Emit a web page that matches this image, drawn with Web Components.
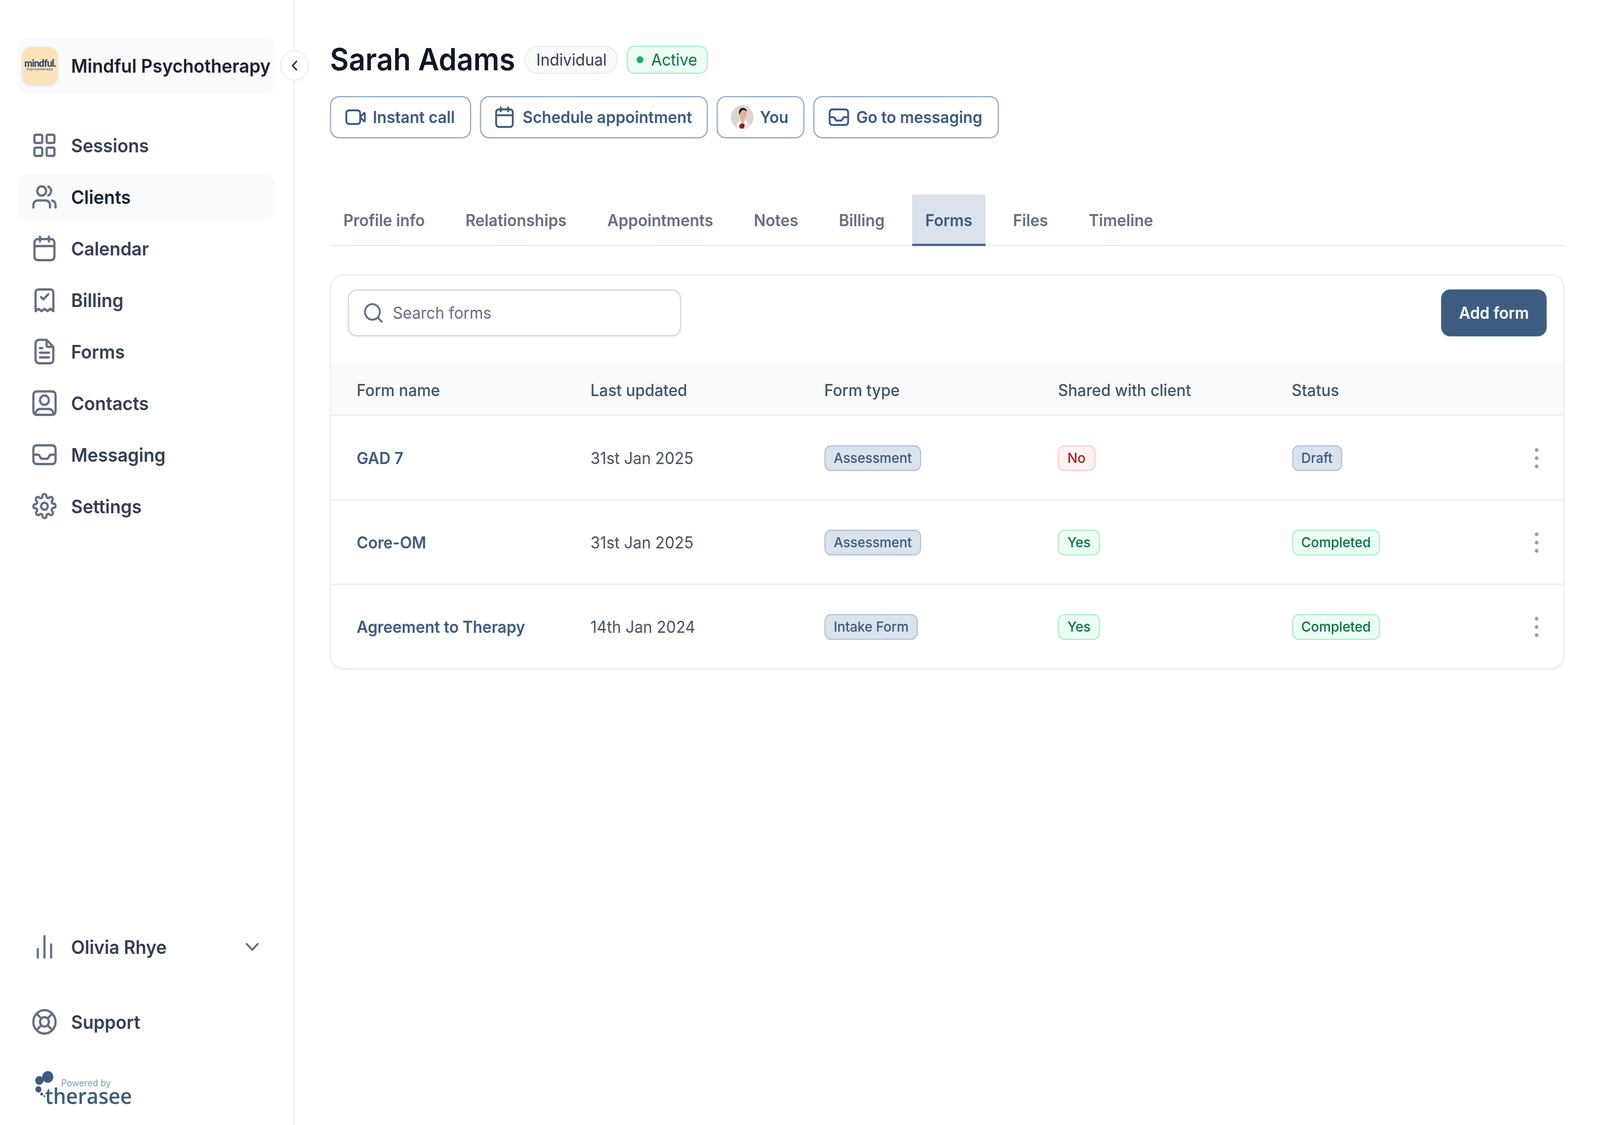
<!DOCTYPE html>
<html lang="en">
<head>
<meta charset="utf-8">
<title>Sarah Adams - Forms</title>
<style>
  html, body { margin: 0; padding: 0; width: 100%; height: 100%; background: #fff; overflow: hidden; }
  body { font-family: Inter, "Liberation Sans", sans-serif; }
</style>
</head>
<body>
<app-shell>
  <side-bar slot="side"></side-bar>
  <client-page slot="main"></client-page>
</app-shell>

<script>
const ICONS = {
  sessions: '<rect x="3" y="3" width="7" height="7" rx="1"/><rect x="14" y="3" width="7" height="7" rx="1"/><rect x="3" y="14" width="7" height="7" rx="1"/><rect x="14" y="14" width="7" height="7" rx="1"/>',
  clients: '<path d="M22 21v-2a4.002 4.002 0 0 0-3-3.874M15.5 3.291a4.001 4.001 0 0 1 0 7.418M17 21c0-1.864 0-2.796-.305-3.53a4 4 0 0 0-2.164-2.165C13.796 15 12.864 15 11 15H8c-1.864 0-2.796 0-3.53.305a4 4 0 0 0-2.165 2.164C2 18.204 2 19.136 2 21M13.5 7a4 4 0 1 1-8 0 4 4 0 0 1 8 0Z"/>',
  calendar: '<path d="M21 10H3m13-8v4M8 2v4m-.2 16h8.4c1.68 0 2.52 0 3.162-.327a3 3 0 0 0 1.311-1.311C21 19.72 21 18.88 21 17.2V8.8c0-1.68 0-2.52-.327-3.162a3 3 0 0 0-1.311-1.311C18.72 4 17.88 4 16.2 4H7.8c-1.68 0-2.52 0-3.162.327a3 3 0 0 0-1.311 1.311C3 6.28 3 7.12 3 8.8v8.4c0 1.68 0 2.52.327 3.162a3 3 0 0 0 1.311 1.311C5.28 22 6.12 22 7.8 22Z"/>',
  billing: '<path d="M9 9.5l2 2 4.5-4.5M20 21.5V7c0-1.4 0-2.1-.27-2.64a2.5 2.5 0 0 0-1.09-1.09C18.1 3 17.4 3 16 3H8c-1.4 0-2.1 0-2.64.27a2.5 2.5 0 0 0-1.09 1.09C4 4.9 4 5.6 4 7v14.5l2.67-2 2.66 2 2.67-2 2.67 2 2.66-2 2.67 2Z"/>',
  forms: '<path d="M14 2.27V6.4c0 .56 0 .84.109 1.054a1 1 0 0 0 .437.437c.214.11.494.11 1.054.11h4.13M16 13H8m8 4H8m2-8H8m6-7H8.8c-1.68 0-2.52 0-3.162.327a3 3 0 0 0-1.311 1.311C4 4.28 4 5.12 4 6.8v10.4c0 1.68 0 2.52.327 3.162a3 3 0 0 0 1.311 1.311C6.28 22 7.12 22 8.8 22h6.4c1.68 0 2.52 0 3.162-.327a3 3 0 0 0 1.311-1.311C20 19.72 20 18.88 20 17.2V8l-6-6Z"/>',
  contacts: '<path d="M4 21.818c.603.182 1.416.182 2.8.182h10.4c1.384 0 2.197 0 2.8-.182M4 21.818a2.3 2.3 0 0 1-.362-.142 3 3 0 0 1-1.311-1.311C2 19.723 2 18.883 2 17.2V6.8c0-1.68 0-2.52.327-3.162a3 3 0 0 1 1.311-1.311C4.28 2 5.12 2 6.8 2h10.4c1.68 0 2.52 0 3.162.327a3 3 0 0 1 1.311 1.311C22 4.28 22 5.12 22 6.8v10.4c0 1.68 0 2.52-.327 3.162a3 3 0 0 1-1.311 1.311 2.3 2.3 0 0 1-.362.145M4 21.818c0-.809.005-1.237.077-1.598a4 4 0 0 1 3.143-3.143C7.606 17 8.07 17 9 17h6c.93 0 1.394 0 1.78.077a4 4 0 0 1 3.143 3.143c.072.36.077.79.077 1.598M16 9.5a4 4 0 1 1-8 0 4 4 0 0 1 8 0Z"/>',
  inbox: '<path d="M2.5 12h3.38c.76 0 1.45.43 1.79 1.1l.66 1.3c.34.68 1.03 1.1 1.79 1.1h3.76c.76 0 1.45-.42 1.79-1.1l.66-1.3c.34-.67 1.03-1.1 1.79-1.1h3.38M2 8.8c0-1.68 0-2.52.327-3.162a3 3 0 0 1 1.311-1.311C4.28 4 5.12 4 6.8 4h10.4c1.68 0 2.52 0 3.162.327a3 3 0 0 1 1.311 1.311C22 6.28 22 7.12 22 8.8v6.4c0 1.68 0 2.52-.327 3.162a3 3 0 0 1-1.311 1.311C19.72 20 18.88 20 17.2 20H6.8c-1.68 0-2.52 0-3.162-.327a3 3 0 0 1-1.311-1.311C2 17.72 2 16.88 2 15.2V8.8Z"/>',
  settings: '<path d="M12 15a3 3 0 1 0 0-6 3 3 0 0 0 0 6Z"/><path d="M18.727 14.727a1.5 1.5 0 0 0 .3 1.655l.055.054a1.818 1.818 0 1 1-2.573 2.573l-.055-.055a1.5 1.5 0 0 0-1.654-.3 1.5 1.5 0 0 0-.91 1.373v.155a1.818 1.818 0 1 1-3.635 0V20.1a1.5 1.5 0 0 0-.982-1.373 1.5 1.5 0 0 0-1.655.3l-.054.055a1.818 1.818 0 1 1-2.573-2.573l.055-.055a1.5 1.5 0 0 0 .3-1.654 1.5 1.5 0 0 0-1.373-.91h-.155a1.818 1.818 0 1 1 0-3.635H3.9a1.5 1.5 0 0 0 1.373-.982 1.5 1.5 0 0 0-.3-1.655l-.055-.054A1.818 1.818 0 1 1 7.491 4.59l.054.055a1.5 1.5 0 0 0 1.655.3h.073a1.5 1.5 0 0 0 .909-1.372v-.155a1.818 1.818 0 0 1 3.636 0V3.5a1.5 1.5 0 0 0 .91 1.373 1.5 1.5 0 0 0 1.654-.3l.054-.055a1.818 1.818 0 1 1 2.573 2.573l-.055.055a1.5 1.5 0 0 0-.3 1.654v.073a1.5 1.5 0 0 0 1.373.909h.155a1.818 1.818 0 0 1 0 3.636H20.1a1.5 1.5 0 0 0-1.373.909Z"/>',
  bars: '<path d="M6 21v-7M12 21V3M18 21V10"/>',
  support: '<path d="M9.13 9.13 4.93 4.93M9.13 14.87l-4.2 4.2M14.87 9.13l4.2-4.2M14.87 14.87l4.2 4.2M22 12c0 5.52-4.48 10-10 10S2 17.52 2 12 6.48 2 12 2s10 4.48 10 10ZM16 12a4 4 0 1 1-8 0 4 4 0 0 1 8 0Z"/>',
  chevronDown: '<path d="m6 9 6 6 6-6"/>',
  chevronLeft: '<path d="m15 18-6-6 6-6"/>',
  video: '<path d="M22 8.93c0-.6 0-.9-.12-1.04a.5.5 0 0 0-.42-.17c-.19.01-.43.2-.9.59L17 12l3.56 3.69c.47.39.71.58.9.59a.5.5 0 0 0 .42-.17c.12-.14.12-.44.12-1.04V8.93Z"/><path d="M2 9.8c0-1.68 0-2.52.33-3.16a3 3 0 0 1 1.31-1.31C4.28 5 5.12 5 6.8 5h5.4c1.68 0 2.52 0 3.16.33a3 3 0 0 1 1.31 1.31C17 7.28 17 8.12 17 9.8v4.4c0 1.68 0 2.52-.33 3.16a3 3 0 0 1-1.31 1.31C14.72 19 13.88 19 12.2 19H6.8c-1.68 0-2.52 0-3.16-.33a3 3 0 0 1-1.31-1.31C2 16.72 2 15.88 2 14.2V9.8Z"/>',
  search: '<path d="m21 21-4.35-4.35M19 11a8 8 0 1 1-16 0 8 8 0 0 1 16 0Z"/>',
  dots: '<circle cx="12" cy="5" r=".8"/><circle cx="12" cy="12" r=".8"/><circle cx="12" cy="19" r=".8"/>'
};

class UiIcon extends HTMLElement {
  connectedCallback() {
    const size = this.getAttribute('size') || 24;
    const width = this.getAttribute('stroke') || 2;
    this.attachShadow({ mode: 'open' });
    this.shadowRoot.innerHTML = `
      <style>
        :host { display: inline-flex; flex: none; width: ${size}px; height: ${size}px; }
        svg { width: 100%; height: 100%; display: block; fill: none; stroke: currentColor;
              stroke-width: ${width}; stroke-linecap: round; stroke-linejoin: round; }
      </style>
      <svg viewBox="0 0 24 24" aria-hidden="true">${ICONS[this.getAttribute('name')] || ''}</svg>`;
  }
}
customElements.define('ui-icon', UiIcon);

let shellTmpl = document.createElement('template');
shellTmpl.innerHTML = `
<style>
  :host { display: grid; grid-template-columns: 265px minmax(0, 1fr); width: 1440px; height: 960px; transform-origin: 0 0;
          font-family: Inter, "Liberation Sans", sans-serif; background: #fff; }
</style>
<slot name="side"></slot>
<slot name="main"></slot>`;
class AppShell extends HTMLElement {
  constructor() {
    super();
    this.attachShadow({ mode: 'open' });
    this.shadowRoot.appendChild(shellTmpl.content.cloneNode(true));
  }
  connectedCallback() {
    // design is 1440x960, fit it to the window that we really got
    this.style.transform = `scale(${window.innerWidth / 1440}, ${window.innerHeight / 960})`;
  }
}
customElements.define('app-shell', AppShell);

let navTmpl = document.createElement('template');
navTmpl.innerHTML = `
<style>
  :host { display: flex; align-items: center; gap: 12px; height: 40px; padding: 0 12px; border-radius: 8px;
          color: #344054; font-size: 16px; font-weight: 600; line-height: 24px; }
  :host([active]) { background: #f9fafb; color: #182230; }
  .icon { color: #667085; display: flex; }
  .label { flex: 1; white-space: nowrap; }
  .after { color: #667085; display: flex; margin-right: -1px; }
</style>
<span class="icon"><slot name="icon"></slot></span>
<span class="label"><slot></slot></span>
<span class="after"><slot name="after"></slot></span>`;
class NavItem extends HTMLElement {
  constructor() {
    super();
    this.attachShadow({ mode: 'open' });
    this.shadowRoot.appendChild(navTmpl.content.cloneNode(true));
  }
  connectedCallback() {
    const name = this.getAttribute('icon');
    if (name && !this.querySelector('[slot=icon]')) {
      const icon = document.createElement('ui-icon');
      icon.setAttribute('name', name);
      icon.setAttribute('slot', 'icon');
      this.appendChild(icon);
    }
  }
}
customElements.define('nav-item', NavItem);

let brandTmpl = document.createElement('template');
brandTmpl.innerHTML = `
<style>
  :host { display: flex; align-items: center; gap: 12px; height: 48px; padding: 0 4px; border-radius: 8px;
          background: #f9fafb; color: #182230; font-size: 16px; font-weight: 600; white-space: nowrap; }
  .logo { width: 32px; height: 32px; border-radius: 8px; background: #fde3b8; flex: none; box-sizing: border-box;
          display: flex; flex-direction: column; align-items: center; justify-content: center;
          box-shadow: 0 1px 2px rgba(16,24,40,.12); color: #2b4468; }
  .m { font-family: Lato, Inter, sans-serif; font-weight: 900; font-size: 8.6px; line-height: 8px; letter-spacing: -.4px; }
  .p { font-family: Inter, sans-serif; font-weight: 600; font-size: 2.5px; line-height: 3.5px; letter-spacing: .42px; }
</style>
<div class="logo"><span class="m">mindful.</span><span class="p">Psychotherapy</span></div>
<slot></slot>`;
class BrandCard extends HTMLElement {
  constructor() {
    super();
    this.attachShadow({ mode: 'open' });
    this.shadowRoot.appendChild(brandTmpl.content.cloneNode(true));
  }
}
customElements.define('brand-card', BrandCard);

let poweredTmpl = document.createElement('template');
poweredTmpl.innerHTML = `
<style>
  :host { display: flex; align-items: flex-start; height: 28px; margin: -2px 0 2px 15px; color: #3e5c82; }
  svg { width: 18px; height: 28px; flex: none; fill: #3e5c82; margin-right: -8.5px; }
  .words { display: flex; flex-direction: column; padding-top: 6.5px; }
  .by { margin-left: 14.5px; font-size: 8px; line-height: 7px; color: #7f9cc6; white-space: nowrap; }
  .name { font-family: "Open Sans", sans-serif; font-size: 18.4px; font-weight: 600; line-height: 13px; white-space: nowrap; }
</style>
<svg viewBox="0 0 18 28" aria-hidden="true">
  <circle cx="12" cy="5" r="5"/><circle cx="4.4" cy="8" r="3.7"/><circle cx="3.6" cy="15.6" r="2.7"/>
  <circle cx="6.6" cy="19.6" r="1.3"/><circle cx="9" cy="21.4" r=".8"/>
</svg>
<div class="words"><span class="by">Powered by</span><span class="name">therasee</span></div>`;
class PoweredBy extends HTMLElement {
  constructor() {
    super();
    this.attachShadow({ mode: 'open' });
    this.shadowRoot.appendChild(poweredTmpl.content.cloneNode(true));
  }
}
customElements.define('powered-by', PoweredBy);

let sideTmpl = document.createElement('template');
sideTmpl.innerHTML = `
<style>
  :host { display: flex; flex-direction: column; position: relative; box-sizing: border-box; height: 960px;
          padding: 32px 16px 16px; border-right: 1px solid #eaecf0; }
  nav { display: flex; flex-direction: column; gap: 4px; margin-top: 24px; }
  .foot { margin-top: auto; display: flex; flex-direction: column; gap: 24px; }
  .collapse { position: absolute; left: 252px; top: 43px; width: 26px; height: 26px; box-sizing: border-box; border-radius: 50%;
              background: #fff; border: 1px solid #eaecf0; color: #344054; display: flex; align-items: center; justify-content: center; }
</style>
<brand-card>Mindful Psychotherapy</brand-card>
<div class="collapse"><ui-icon name="chevronLeft" size="14" stroke="2.6"></ui-icon></div>
<nav>
  <nav-item icon="sessions">Sessions</nav-item>
  <nav-item icon="clients" active>Clients</nav-item>
  <nav-item icon="calendar">Calendar</nav-item>
  <nav-item icon="billing">Billing</nav-item>
  <nav-item icon="forms">Forms</nav-item>
  <nav-item icon="contacts">Contacts</nav-item>
  <nav-item icon="inbox">Messaging</nav-item>
  <nav-item icon="settings">Settings</nav-item>
</nav>
<div class="foot">
  <nav-item icon="bars">Olivia Rhye<ui-icon slot="after" name="chevronDown" size="20"></ui-icon></nav-item>
  <nav-item icon="support">Support</nav-item>
  <powered-by></powered-by>
</div>`;
class SideBar extends HTMLElement {
  constructor() {
    super();
    this.attachShadow({ mode: 'open' });
    this.shadowRoot.appendChild(sideTmpl.content.cloneNode(true));
  }
}
customElements.define('side-bar', SideBar);

let badgeTmpl = document.createElement('template');
badgeTmpl.innerHTML = `
<style>
  :host { display: inline-flex; align-items: center; gap: 7px; box-sizing: border-box; height: 22px; padding: 0 7.5px; border-radius: 6px;
          border: 1px solid #b0c2d9; background: #dae2ec; color: #3e5c82; font-size: 12px; font-weight: 500; line-height: 18px; white-space: nowrap; }
  :host([kind=green]) { border-color: #abefc6; background: #ecfdf3; color: #067647; }
  :host([kind=red]) { border-color: #fecdca; background: #fef3f2; color: #b42318; }
  :host([pill]) { height: 24px; padding: 0 8.5px; border-radius: 7px; font-size: 14px; font-weight: 400; }
  :host([kind=gray]) { border-color: #eaecf0; background: #f9fafb; color: #344054; border-radius: 12px; padding: 0 8.5px 0 9.5px; }
  .dot { display: none; width: 6px; height: 6px; border-radius: 50%; background: #17b26a; }
  :host([dot]) .dot { display: block; }
</style>
<span class="dot"></span><slot></slot>`;
class StatusBadge extends HTMLElement {
  constructor() {
    super();
    this.attachShadow({ mode: 'open' });
    this.shadowRoot.appendChild(badgeTmpl.content.cloneNode(true));
  }
}
customElements.define('status-badge', StatusBadge);

let actionTmpl = document.createElement('template');
actionTmpl.innerHTML = `
<style>
  :host { display: inline-flex; align-items: center; gap: 6px; box-sizing: border-box; height: 36px; padding: 0 13.5px 0 11.5px; border-radius: 8px;
          border: 1px solid #8fa9cc; background: #fff; color: #3e5c82; font-size: 14px; font-weight: 600; line-height: 20px;
          white-space: nowrap; box-shadow: 0 1px 2px rgba(16,24,40,.05); }
</style>
<slot name="icon"></slot><slot></slot>`;
class ActionButton extends HTMLElement {
  constructor() {
    super();
    this.attachShadow({ mode: 'open' });
    this.shadowRoot.appendChild(actionTmpl.content.cloneNode(true));
  }
}
customElements.define('action-button', ActionButton);

let avatarTmpl = document.createElement('template');
avatarTmpl.innerHTML = `
<style>
  :host { display: inline-block; width: 20px; height: 20px; flex: none; }
  svg { display: block; width: 100%; height: 100%; }
</style>
<svg viewBox="0 0 60 60" aria-hidden="true">
  <defs><clipPath id="c"><circle cx="30" cy="30" r="29.5"/></clipPath></defs>
  <g clip-path="url(#c)">
    <rect width="60" height="60" fill="#d9d7d2"/>
    <path d="M20 60c-2-9-1-16 2-20l12-2 16 6c3 5 3 11 2 16Z" fill="#f0e8d8"/>
    <path d="M24 40l6 12 8-13-4-6h-8Z" fill="#e7b79d"/>
    <path d="M16 44l10-6 6 14-6 8H14ZM36 38l8 2-6 20h-6l2-10Z" fill="#fbfaf6"/>
    <ellipse cx="32" cy="22" rx="9.5" ry="13" fill="#e2b096" transform="rotate(6 32 22)"/>
    <path d="M22 24c-3-11 2-18 10-18 6 0 10 4 11 10-4-3-7-5-11-4-5 1-7 6-10 12Z" fill="#23201f"/>
    <circle cx="29" cy="53" r="7" fill="#a5161c"/>
    <circle cx="33" cy="51" r="3.5" fill="#7d0f14"/>
  </g>
  <circle cx="30" cy="30" r="29.5" fill="none" stroke="#b9b5ac" stroke-width="1"/>
</svg>`;
class UserAvatar extends HTMLElement {
  constructor() {
    super();
    this.attachShadow({ mode: 'open' });
    this.shadowRoot.appendChild(avatarTmpl.content.cloneNode(true));
  }
}
customElements.define('user-avatar', UserAvatar);

let tabTmpl = document.createElement('template');
tabTmpl.innerHTML = `
<style>
  :host { display: flex; align-items: center; box-sizing: border-box; height: 44px; padding: 1px 12px 0; margin-bottom: -1px;
          border-bottom: 2px solid transparent; color: #667085; font-size: 14px; font-weight: 600; white-space: nowrap; }
  :host([active]) { background: #dae2ec; color: #3e5c82; border-bottom-color: #4a6c9b; }
</style>
<slot></slot>`;
class TabItem extends HTMLElement {
  constructor() {
    super();
    this.attachShadow({ mode: 'open' });
    this.shadowRoot.appendChild(tabTmpl.content.cloneNode(true));
  }
}
customElements.define('tab-item', TabItem);

let rowTmpl = document.createElement('template');
rowTmpl.innerHTML = `
<style>
  :host { display: grid; grid-template-columns: repeat(4, 210.4px) 1fr 24px; align-items: center; box-sizing: border-box; height: 72px;
          padding: 0 12.5px 0 23px; border-top: 1px solid #eaecf0; font-size: 14px; color: #475467; }
  .name { color: #3e5c82; font-weight: 600; white-space: nowrap; }
  .more { justify-self: end; color: #98a2b3; display: flex; }
</style>
<span class="name"><slot name="name"></slot></span>
<span><slot name="date"></slot></span>
<span><slot name="type"></slot></span>
<span><slot name="shared"></slot></span>
<span><slot name="status"></slot></span>
<span class="more"><ui-icon name="dots" size="24" stroke="1.7"></ui-icon></span>`;
class FormRow extends HTMLElement {
  constructor() {
    super();
    this.attachShadow({ mode: 'open' });
    this.shadowRoot.appendChild(rowTmpl.content.cloneNode(true));
  }
}
customElements.define('form-row', FormRow);

let cardTmpl = document.createElement('template');
cardTmpl.innerHTML = `
<style>
  :host { display: block; box-sizing: border-box; margin-top: 24px; border: 1px solid #eaecf0; border-radius: 12px; background: #fff;
          box-shadow: 0 1px 2px rgba(16,24,40,.05); overflow: hidden; }
  .tools { display: flex; align-items: flex-start; justify-content: space-between; height: 75px; padding: 12px 15px 0; box-sizing: border-box; }
  .search { display: flex; align-items: center; gap: 7.5px; box-sizing: border-box; width: 300px; height: 39.5px; padding: 0 12px; border-radius: 8px;
            border: 1px solid #d0d5dd; color: #667085; font-size: 14px; box-shadow: 0 1px 2px rgba(16,24,40,.05); }
  .add { display: flex; align-items: center; box-sizing: border-box; height: 39.5px; padding: 0 16px; border-radius: 8px;
         background: #3e5c82; color: #fff; font-size: 14px; font-weight: 600; box-shadow: 0 1px 2px rgba(16,24,40,.05); }
  .head { display: grid; grid-template-columns: repeat(5, 210.4px); align-items: center; height: 44px; padding-left: 23px;
          background: #f9fafb; color: #475467; font-size: 14px; font-weight: 500; }
</style>
<div class="tools">
  <div class="search"><ui-icon name="search" size="20"></ui-icon>Search forms</div>
  <div class="add">Add form</div>
</div>
<div class="head"><span>Form name</span><span>Last updated</span><span>Form type</span><span>Shared with client</span><span>Status</span></div>
<slot></slot>`;
class FormsCard extends HTMLElement {
  constructor() {
    super();
    this.attachShadow({ mode: 'open' });
    this.shadowRoot.appendChild(cardTmpl.content.cloneNode(true));
  }
}
customElements.define('forms-card', FormsCard);

let pageTmpl = document.createElement('template');
pageTmpl.innerHTML = `
<style>
  :host { display: block; box-sizing: border-box; min-width: 0; padding: 32px 32px 0; color: #101828; }
  .title { display: flex; align-items: center; gap: 8px; height: 38px; }
  h1 { margin: 0 .5px 0 0; font-size: 26px; font-weight: 600; line-height: 38px; color: #101828; white-space: nowrap; }
  .actions { display: flex; gap: 8px; margin-top: 12px; }
  .tabs { display: flex; gap: 12.6px; margin-top: 48px; border-bottom: 1px solid #eaecf0; }
</style>
<div class="title">
  <h1>Sarah Adams</h1>
  <status-badge pill kind="gray">Individual</status-badge>
  <status-badge pill dot kind="green">Active</status-badge>
</div>
<div class="actions">
  <action-button><ui-icon slot="icon" name="video" size="20"></ui-icon>Instant call</action-button>
  <action-button><ui-icon slot="icon" name="calendar" size="20"></ui-icon>Schedule appointment</action-button>
  <action-button><user-avatar slot="icon"></user-avatar>You</action-button>
  <action-button><ui-icon slot="icon" name="inbox" size="20"></ui-icon>Go to messaging</action-button>
</div>
<div class="tabs">
  <tab-item>Profile info</tab-item>
  <tab-item>Relationships</tab-item>
  <tab-item>Appointments</tab-item>
  <tab-item>Notes</tab-item>
  <tab-item>Billing</tab-item>
  <tab-item active>Forms</tab-item>
  <tab-item>Files</tab-item>
  <tab-item>Timeline</tab-item>
</div>
<forms-card>
  <form-row>
    <span slot="name">GAD 7</span><span slot="date">31st Jan 2025</span>
    <status-badge slot="type">Assessment</status-badge>
    <status-badge slot="shared" kind="red">No</status-badge>
    <status-badge slot="status">Draft</status-badge>
  </form-row>
  <form-row>
    <span slot="name">Core-OM</span><span slot="date">31st Jan 2025</span>
    <status-badge slot="type">Assessment</status-badge>
    <status-badge slot="shared" kind="green">Yes</status-badge>
    <status-badge slot="status" kind="green">Completed</status-badge>
  </form-row>
  <form-row>
    <span slot="name">Agreement to Therapy</span><span slot="date">14th Jan 2024</span>
    <status-badge slot="type">Intake Form</status-badge>
    <status-badge slot="shared" kind="green">Yes</status-badge>
    <status-badge slot="status" kind="green">Completed</status-badge>
  </form-row>
</forms-card>`;
class ClientPage extends HTMLElement {
  constructor() {
    super();
    this.attachShadow({ mode: 'open' });
    this.shadowRoot.appendChild(pageTmpl.content.cloneNode(true));
  }
}
customElements.define('client-page', ClientPage);
</script>
</body>
</html>
